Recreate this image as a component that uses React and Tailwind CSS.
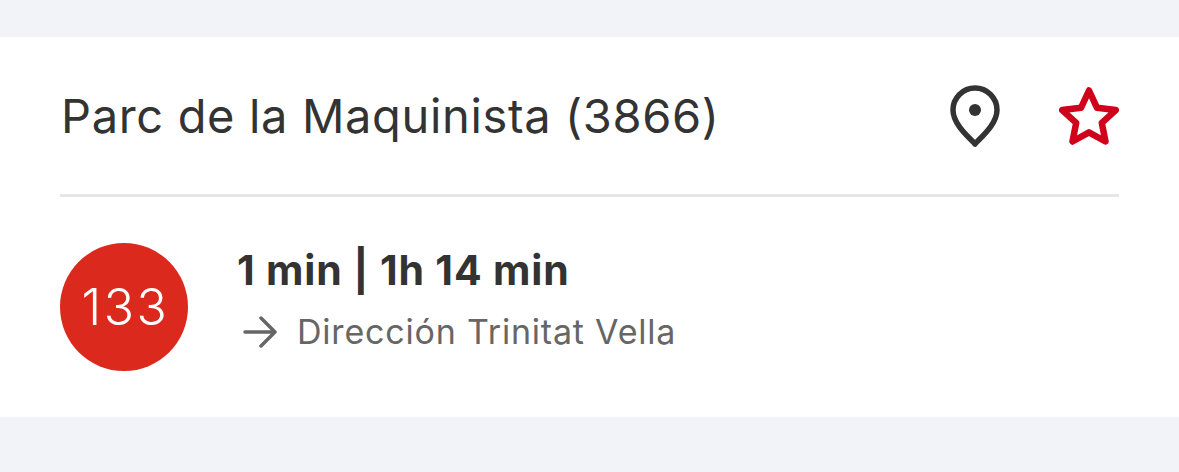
export default function App() {
  return (
    <div className="h-[472px] w-[1179px] overflow-hidden bg-[#f2f3f8] pt-[37px] font-['Inter',sans-serif]">
      <div className="h-[380px] bg-white px-[60px]">
        <div className="flex h-[160px] items-center justify-between border-b-[3px] border-[#e6e6e6]">
          <h1 className="pl-[1px] text-[47px] font-normal leading-none tracking-[0.65px] text-[#333333]">Parc de la Maquinista (3866)</h1>
          <div className="flex items-center gap-[59px]">
            <svg width="50" height="62" viewBox="0 0 50 62" fill="none" stroke="#333333" strokeWidth="5.5" strokeLinejoin="round">
              <path d="M25 59C21 54 3 40 3 25a22 22 0 0 1 44 0c0 15-18 29-22 34Z" />
              <circle cx="25" cy="25" r="6" fill="#333333" stroke="none" />
            </svg>
            <svg width="60" height="58" viewBox="0 0 60 58" fill="none" stroke="#d0021b" strokeWidth="6.500" strokeLinejoin="round">
              <path d="M30 3.500l8 17.300 18.800 2.300-14 12.700 3.700 18.700-16.500-9.200-16.500 9.200 3.700-18.700-14-12.700 18.800-2.300Z" />
            </svg>
          </div>
        </div>
        <div className="flex items-center gap-[48px] pt-[46px]">
          <div className="flex h-[128px] w-[128px] items-center justify-center rounded-full bg-[#dc291e] pl-[3px] text-[50px] font-[350] tracking-[2.500px] text-white">133</div>
          <div className="flex flex-col gap-[16px] pb-[14px]">
            <div className="pl-[1px] text-[41px] font-bold leading-[48px] tracking-[0.85px] text-[#333333]">1 min | 1h 14 min</div>
            <div className="flex items-center gap-[20px] pl-[7px] text-[34px] leading-[44px] tracking-[0.8px] text-[#666666]">
              <svg width="34" height="32" viewBox="0 0 34 32" fill="none" stroke="#666666" strokeWidth="3.500" strokeLinecap="round" strokeLinejoin="round">
                <path d="M2 16h30M18 2l14 14-14 14" />
              </svg>
              <span>Dirección Trinitat Vella</span>
            </div>
          </div>
        </div>
      </div>
    </div>
  );
}
